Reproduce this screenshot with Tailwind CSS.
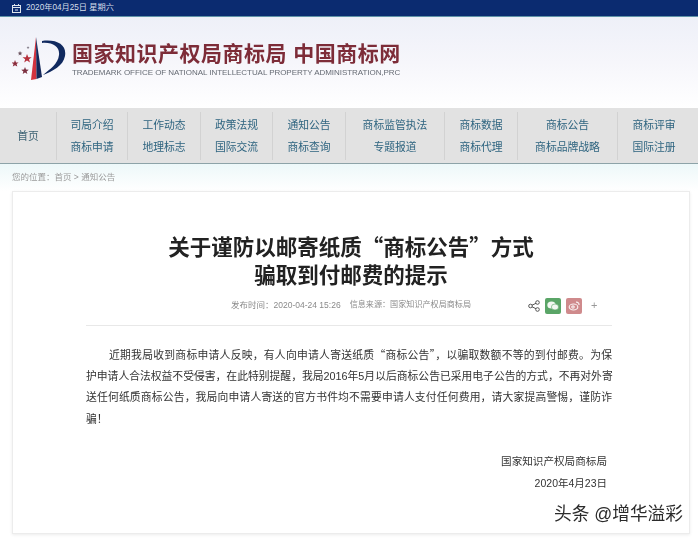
<!DOCTYPE html>
<html lang="zh-CN">
<head>
  <meta charset="UTF-8" />
  <meta name="viewport" content="width=device-width, initial-scale=1.0" />
  <title>关于谨防以邮寄纸质“商标公告”方式骗取到付邮费的提示</title>
  <script src="https://cdn.jsdelivr.net/npm/@tailwindcss/browser@4"></script>
</head>
<body class="relative w-[698px] h-[538px] overflow-hidden bg-white blur-[0.35px] font-['Liberation_Sans','Noto_Sans_CJK_SC',sans-serif] text-[#444]">
  <!-- top bar -->
  <div class="h-[17px] bg-[#0b2b70] border-b border-[#5f93a8] flex items-center pl-3 gap-[5px] text-[8.2px] text-[#d5deea]">
    <svg width="9" height="9" viewBox="0 0 9 9" fill="none" stroke="#dfe6ee" stroke-width="1"><rect x="0.5" y="1.5" width="8" height="7" /><path d="M0.5 3.5H8.5M2.5 0V2M6.5 0V2M3 6H6" /></svg>
    <span>2020年04月25日 星期六</span>
  </div>

  <!-- logo header -->
  <div class="h-[91px] bg-gradient-to-b from-[#eef0f8] via-[#f6f6fb] to-white flex items-start pl-[12px] pt-[20px] gap-[6px]">
    <svg width="54" height="44" viewBox="0 0 54 44">
      <path d="M30 4 C45 2 55 8 53 19 C51 29 41 34 31 38 C38 32 46 27 47 18 C48 10 41 5 30 6Z" fill="#10295f" />
      <path d="M24 0 L19 43 L24.500 42 Z" fill="#d3333f" />
      <path d="M24 0 L24.500 42 L30 40 Z" fill="#15285a" />
      <path d="M15 17l1.300 3.200 3.400.1-2.700 2 1 3.200-3-1.900-2.800 1.900 1-3.200-2.700-2 3.400-.1z" fill="#b5303c" />
      <path d="M3 23l1 2.400 2.600.1-2 1.600.7 2.500-2.300-1.400-2.200 1.400.7-2.500-2-1.600 2.600-.1z" fill="#8c2c3c" />
      <path d="M13 30l1 2.600 2.800.1-2.200 1.700.8 2.700-2.400-1.500-2.300 1.500.7-2.700-2.200-1.700 2.800-.1z" fill="#7c3040" />
      <path d="M8 14l.7 1.600 1.700.1-1.300 1 .4 1.700-1.500-.9-1.400.9.4-1.700-1.300-1 1.700-.1z" fill="#6c5560" />
      <path d="M16 9l.4 1 1.100 0-.8.7.3 1.100-1-.6-.9.600.3-1.100-.8-.7 1.100 0z" fill="#807a86" />
    </svg>
    <div class="pt-[5px]">
      <div class="text-[21px] leading-[24px] font-bold text-[#7d2c38] whitespace-nowrap tracking-[0.5px]">国家知识产权局商标局 中国商标网</div>
      <div class="text-[8px] leading-[12px] mt-[1px] text-[#666b74] whitespace-nowrap tracking-[-0.05px]">TRADEMARK OFFICE OF NATIONAL INTELLECTUAL PROPERTY ADMINISTRATION,PRC</div>
    </div>
  </div>

  <!-- nav -->
  <nav class="h-[56px] bg-[#e2e2e2] border-b border-[#8da3a8] grid grid-cols-[57px_71px_73px_72px_73px_99px_73px_100px_80px] items-center text-center text-[10.8px] leading-[22px] text-[#2f6580]">
    <div class="h-[48px] flex items-center justify-center border-r border-[#d2d2d2] text-[#3f6475]">首页</div>
    <div class="h-[48px] py-[2px] border-r border-[#d2d2d2]"><p>司局介绍</p><p>商标申请</p></div>
    <div class="h-[48px] py-[2px] border-r border-[#d2d2d2]"><p>工作动态</p><p>地理标志</p></div>
    <div class="h-[48px] py-[2px] border-r border-[#d2d2d2]"><p>政策法规</p><p>国际交流</p></div>
    <div class="h-[48px] py-[2px] border-r border-[#d2d2d2]"><p>通知公告</p><p>商标查询</p></div>
    <div class="h-[48px] py-[2px] border-r border-[#d2d2d2]"><p>商标监管执法</p><p>专题报道</p></div>
    <div class="h-[48px] py-[2px] border-r border-[#d2d2d2]"><p>商标数据</p><p>商标代理</p></div>
    <div class="h-[48px] py-[2px] border-r border-[#d2d2d2]"><p>商标公告</p><p>商标品牌战略</p></div>
    <div class="h-[48px] py-[2px] pr-[8px]"><p>商标评审</p><p>国际注册</p></div>
  </nav>

  <!-- breadcrumb -->
  <div class="h-[27px] bg-gradient-to-b from-[#edf8f9] to-white pl-[12px] pt-[6px] text-[8.5px] leading-[14px] text-[#9a9a9a]">
    您的位置：首页 &gt; 通知公告
  </div>

  <!-- article card -->
  <main class="ml-[12px] w-[678px] h-[343px] bg-white border border-[#ececec] shadow-[0_1px_3px_rgba(0,0,0,0.08)]">
    <h1 class="pt-[40px] text-center font-['Noto_Sans_CJK_SC',sans-serif] text-[21.5px] leading-[28px] font-bold text-[#222]">
      关于谨防以邮寄纸质“商标公告”方式<br />骗取到付邮费的提示
    </h1>

    <div class="ml-[73px] mr-[77px] h-[38px] pb-[2px] border-b border-[#e8e8e8] flex items-center pl-[145px] text-[8.5px] text-[#8a8a8a] whitespace-nowrap">
      <span>发布时间：2020-04-24 15:26</span>
      <span class="ml-[9px] text-[8.1px]">信息来源：国家知识产权局商标局</span>
      <div class="ml-[57px] flex items-center gap-[5px]">
        <svg width="12" height="12" viewBox="0 0 12 12" fill="none" stroke="#555" stroke-width="1"><circle cx="2.500" cy="6" r="1.800" /><circle cx="9.500" cy="2.500" r="1.800" /><circle cx="9.500" cy="9.500" r="1.800" /><path d="M4 5.200L8 3.300M4 6.800L8 8.700" /></svg>
        <div class="w-[16px] h-[16px] rounded-[2px] bg-[#5aa567] flex items-center justify-center">
          <svg width="12" height="10" viewBox="0 0 12 10" fill="#f1f7f1"><ellipse cx="4.500" cy="4" rx="4.200" ry="3.500" /><ellipse cx="8" cy="6" rx="3.600" ry="3" stroke="#5aa567" stroke-width="0.600" /></svg>
        </div>
        <div class="w-[16px] h-[16px] rounded-[2px] bg-[#cf8a8c] flex items-center justify-center">
          <svg width="12" height="10" viewBox="0 0 12 10" fill="none" stroke="#f8eeee" stroke-width="1.200"><ellipse cx="5.500" cy="6" rx="4.300" ry="3" /><circle cx="5" cy="6" r="1.200" /><path d="M8 1.200C10 1 11.300 2.300 11 4" /></svg>
        </div>
        <span class="ml-[4px] text-[11px] leading-none text-[#999]">+</span>
      </div>
    </div>

    <article class="ml-[73px] mr-[77px] mt-[18px] text-[10.8px] leading-[21.6px] text-[#333]">
      <div class="whitespace-nowrap">
        <p class="pl-[23px] [text-align-last:justify] font-['Noto_Sans_CJK_SC',sans-serif]">近期我局收到商标申请人反映，有人向申请人寄送纸质“商标公告”，以骗取数额不等的到付邮费。为保</p>
        <p class="[text-align-last:justify]">护申请人合法权益不受侵害，在此特别提醒，我局2016年5月以后商标公告已采用电子公告的方式，不再对外寄</p>
        <p class="[text-align-last:justify]">送任何纸质商标公告，我局向申请人寄送的官方书件均不需要申请人支付任何费用，请大家提高警惕，谨防诈</p>
        <p>骗！</p>
      </div>
      <p class="mt-[21px] pr-[5px] text-right text-[10.600px]">国家知识产权局商标局</p>
      <p class="pr-[5px] text-right text-[10.500px]">2020年4月23日</p>
    </article>
  </main>

  <!-- watermark -->
  <div class="absolute left-[554px] top-[503px] text-[17.700px] leading-[22px] text-[#2b2b2b] whitespace-nowrap [text-shadow:0_0_2px_#fff]">头条 @增华溢彩</div>
</body>
</html>
